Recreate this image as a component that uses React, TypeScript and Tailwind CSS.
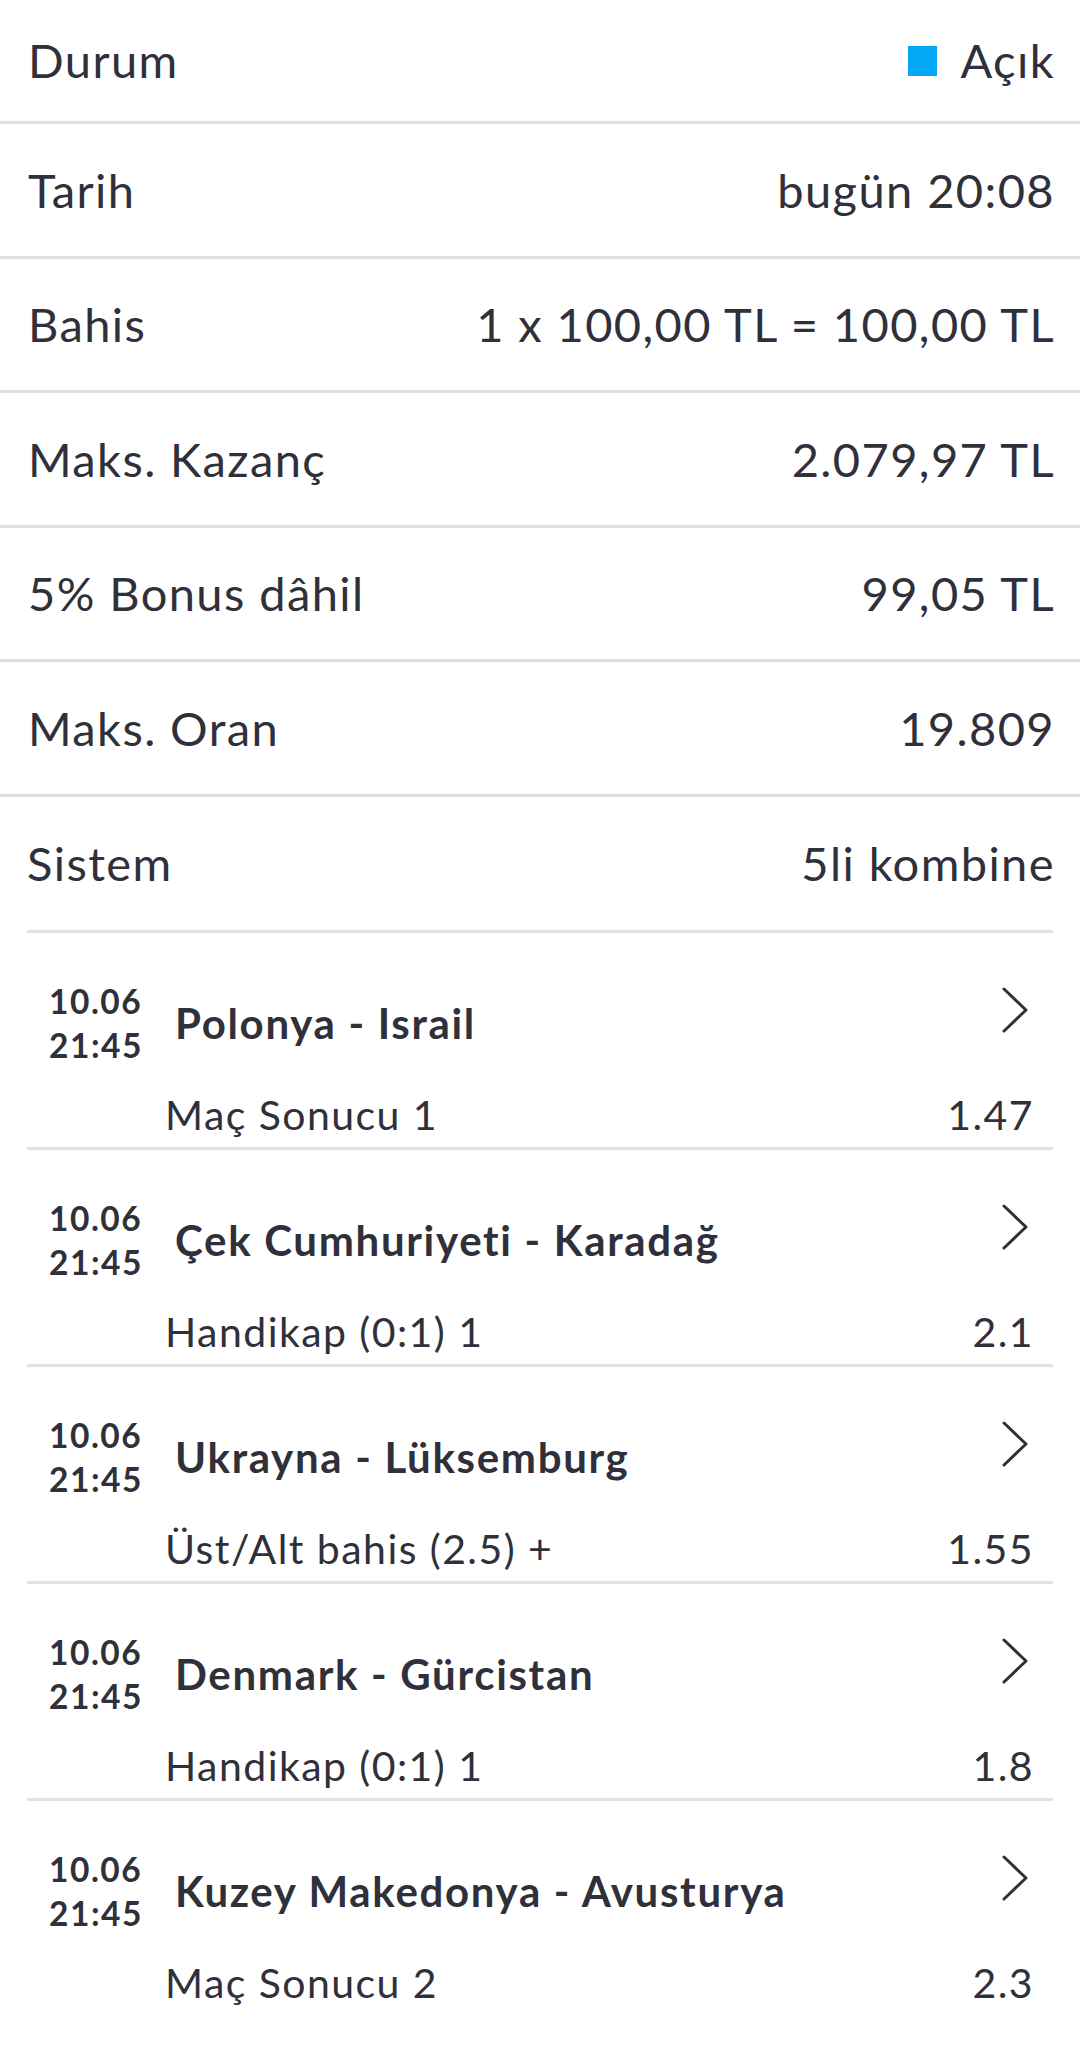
const info = [
  { label: "Tarih", value: "bugün 20:08" },
  { label: "Bahis", value: "1 x 100,00 TL = 100,00 TL" },
  { label: "Maks. Kazanç", value: "2.079,97 TL" },
  { label: "5% Bonus dâhil", value: "99,05 TL" },
  { label: "Maks. Oran", value: "19.809" },
];

const matches = [
  { teams: "Polonya - Israil", market: "Maç Sonucu 1", odd: "1.47" },
  { teams: "Çek Cumhuriyeti - Karadağ", market: "Handikap (0:1) 1", odd: "2.1" },
  { teams: "Ukrayna - Lüksemburg", market: "Üst/Alt bahis (2.5) +", odd: "1.55" },
  { teams: "Denmark - Gürcistan", market: "Handikap (0:1) 1", odd: "1.8" },
  { teams: "Kuzey Makedonya - Avusturya", market: "Maç Sonucu 2", odd: "2.3" },
];

function Chevron() {
  return (
    <svg width="28" height="46" viewBox="0 0 28 46" fill="none" className="shrink-0 mt-[8px] mr-[5px]">
      <polyline points="3,2 25,23 3,44" stroke="#30303a" strokeWidth="3" strokeLinecap="round" strokeLinejoin="round" />
    </svg>
  );
}

export default function App() {
  return (
    <div className="w-[1080px] min-h-[2065px] bg-white text-[#30303a] font-['Lato','Noto_Sans',sans-serif]">
      {/* Durum */}
      <div className="flex items-center justify-between h-[124px] pl-[28px] pr-[25px] border-b-[3px] border-[#dedede] text-[47px] tracking-[0.03em]">
        <span>Durum</span>
        <span className="flex items-center gap-[24px]">
          <span className="w-[29px] h-[30px] bg-[#03a9f4]" />
          Açık
        </span>
      </div>

      {info.map((r) => (
        <div
          key={r.label}
          className="flex items-center justify-between h-[134.5px] pl-[28px] pr-[25px] border-b-[3px] border-[#dedede] text-[47px] tracking-[0.03em]"
        >
          <span>{r.label}</span>
          <span>{r.value}</span>
        </div>
      ))}

      {/* Sistem + maçlar */}
      <div className="px-[27px]">
        <div className="flex items-center justify-between h-[136px] border-b-[3px] border-[#e1e3e3] text-[47px] tracking-[0.03em]">
          <span>Sistem</span>
          <span className="-mr-[2px]">5li kombine</span>
        </div>

        {matches.map((m, i) => (
          <div
            key={m.teams}
            className={`pt-[46px] pb-[8px] pl-[22px] pr-[19px] ${
              i < matches.length - 1 ? "border-b-[3px] border-[#e1e3e3]" : ""
            }`}
          >
            <div className="flex items-start">
              <div className="w-[126px] text-[33.5px] leading-[44px] font-bold tracking-[0.045em]">
                <div>10.06</div>
                <div>21:45</div>
              </div>
              <div className="flex-1 self-center text-[42px] leading-[50px] font-bold tracking-[0.04em]">{m.teams}</div>
              <Chevron />
            </div>
            <div className="flex items-center justify-between mt-[24px] pl-[116px] text-[41px] leading-[48px] tracking-[0.035em]">
              <span>{m.market}</span>
              <span>{m.odd}</span>
            </div>
          </div>
        ))}
      </div>
    </div>
  );
}
